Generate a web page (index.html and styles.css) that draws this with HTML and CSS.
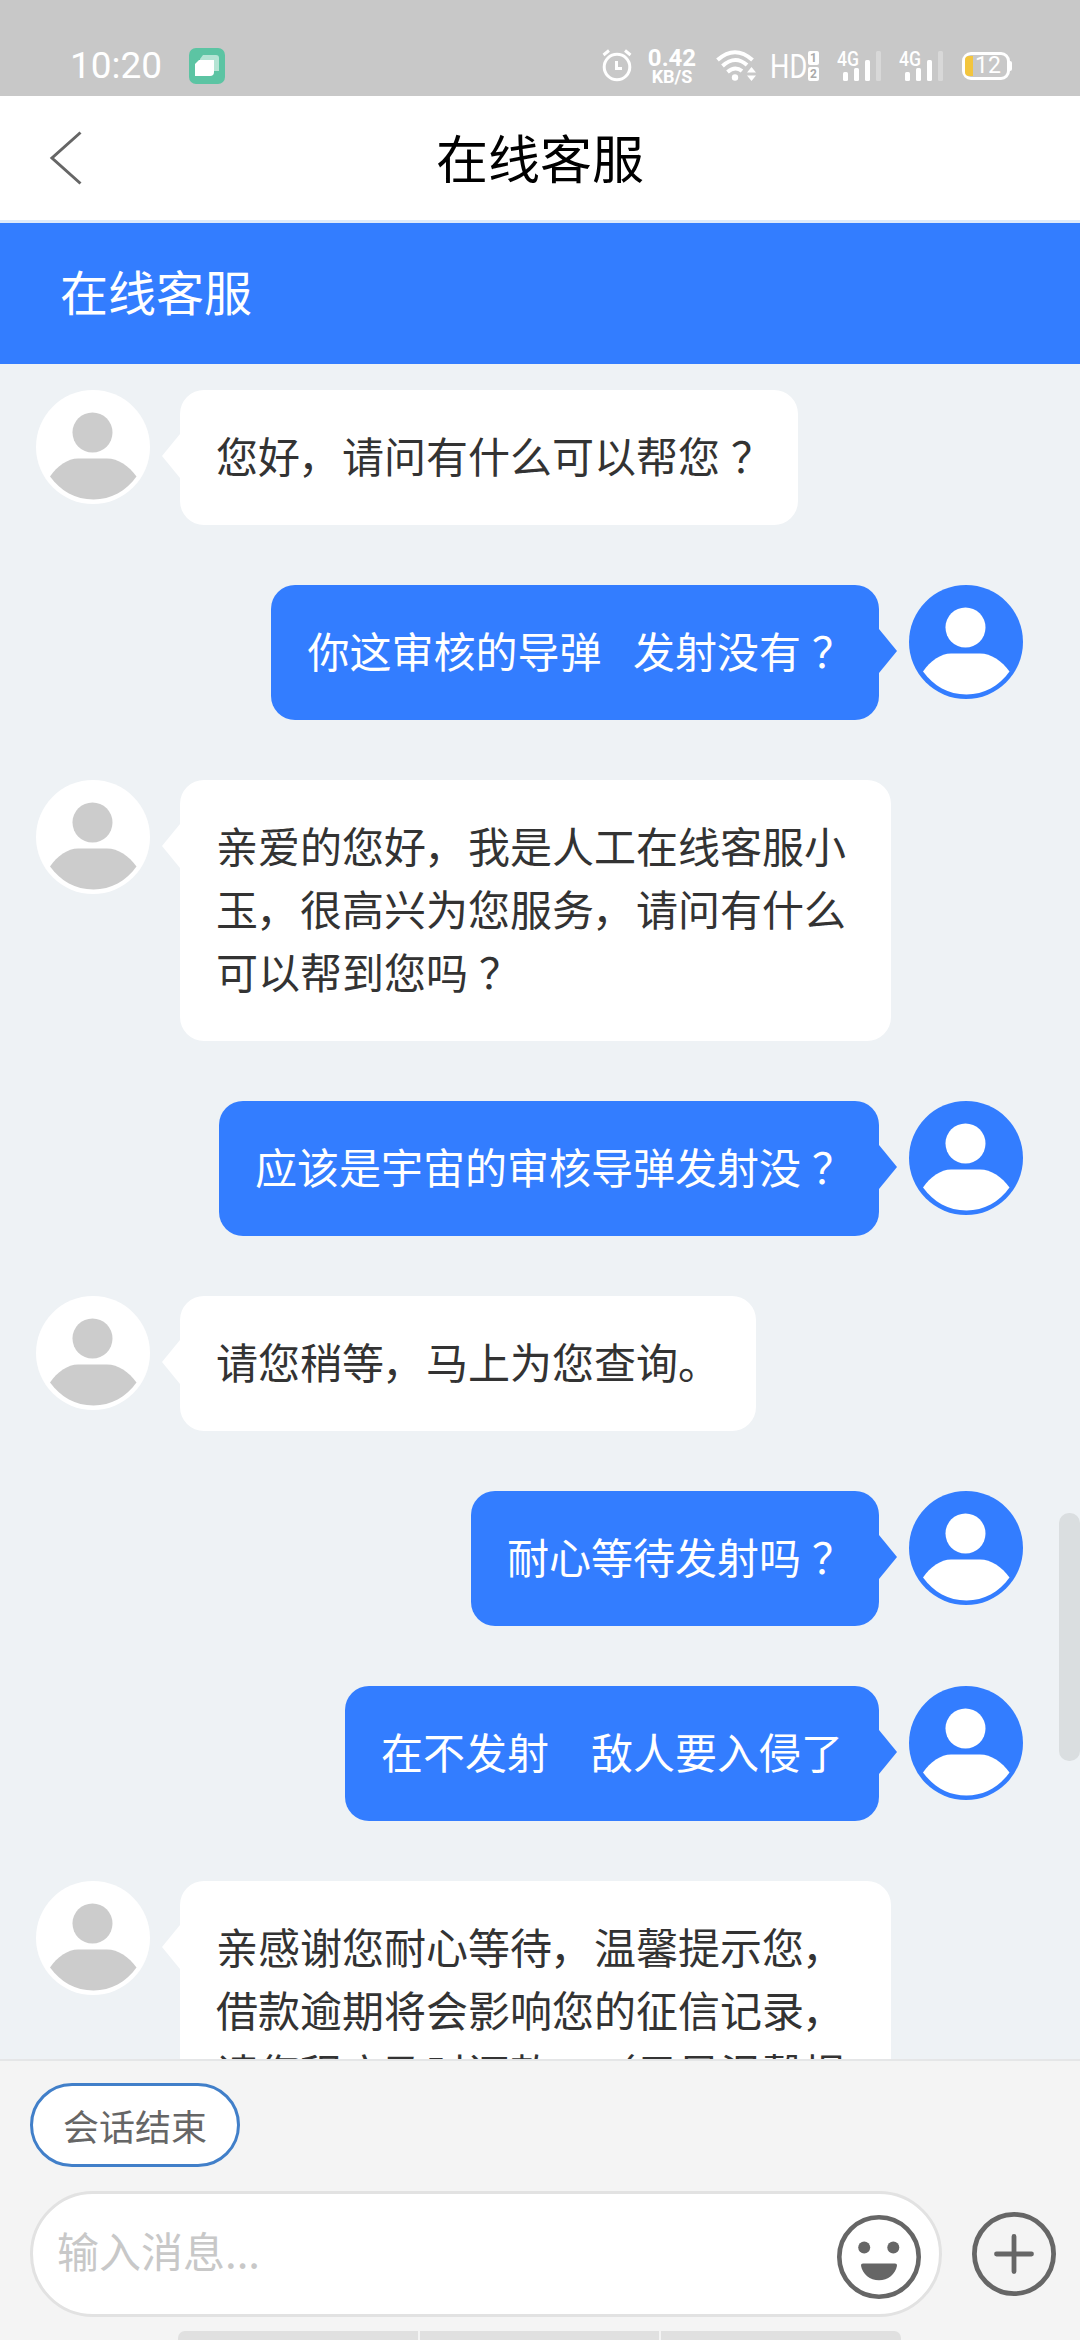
FILE: index.html
```html
<!DOCTYPE html>
<html lang="zh-CN">
<head>
<meta charset="utf-8">
<title>在线客服</title>
<link rel="stylesheet" href="styles.css">
</head>
<body>
<svg width="0" height="0" class="defs">
  <symbol id="person" viewBox="0 0 114 114">
    <ellipse cx="56.500" cy="42.500" rx="20" ry="20"/>
    <path d="M14 86.500C21 76 32 68.500 42 68.500H71C82 68.500 93 76 100.500 86.500C90 101 75 109.500 57.500 109.500C39 109.500 25 101 14 86.500Z"/>
  </symbol>
  <symbol id="bars" viewBox="0 0 46 34">
    <rect x="6" y="24" width="5" height="9" rx="1.500"/>
    <rect x="17" y="20" width="5" height="13" rx="1.500"/>
    <rect x="28" y="12" width="5" height="21" rx="1.500"/>
    <rect x="39" y="3" width="5" height="30" rx="1.500" opacity=".3"/>
  </symbol>
</svg>
<div class="screen">
  <div class="status">
    <span class="time">10:20</span>
    <svg class="app" viewBox="0 0 36 36"><rect width="36" height="36" rx="7" fill="#5cc4a3"/><path d="M14 7h13q3 0 3 3v13h-19v-12z" fill="#b5e4d4"/><path d="M10 12h15v12q0 4-4 4h-15v-12z" fill="#fff"/></svg>
    <span class="push"></span>
    <svg class="alarm" viewBox="0 0 30 34"><g fill="none" stroke="#fff" stroke-width="3"><circle cx="15" cy="19" r="12.800"/><path d="M1.500 7l5.500-4.500M28.500 7L23 2.500"/><path d="M14.500 13v7.500H20"/></g></svg>
    <span class="speed"><b>0.42</b><i>KB/S</i></span>
    <svg class="wifi" viewBox="0 0 40 34"><g fill="none" stroke="#fff" stroke-width="4"><path d="M1.500 12Q19 -3.500 36.500 12"/><path d="M6.500 18Q19 6.500 31 17"/><path d="M11.500 24Q19 17.500 26 23"/></g><circle cx="19" cy="29.500" r="3.200" fill="#fff"/><path d="M31 24.500l4.500-5.500 4.500 5.500zM31 27.500h9l-4.500 5.500z" fill="#fff"/></svg>
    <span class="hd">HD</span>
    <span class="sims"><i>1</i><i>2</i></span>
    <span class="signal"><svg><use href="#bars"/></svg><em>4G</em></span>
    <span class="signal last"><svg><use href="#bars"/></svg><em>4G</em></span>
    <span class="battery"><i></i>12</span>
  </div>
  <div class="nav">
    <svg class="back" viewBox="0 0 34 54"><path d="M31.500 1.500L3 27l28.500 25.500" fill="none" stroke="#666" stroke-width="3"/></svg>
    <h1>在线客服</h1>
  </div>
  <div class="banner">在线客服</div>
  <div class="chat">
    <div class="row"><svg class="avatar"><use href="#person"/></svg><div class="bubble">您好<span class="comma">，</span>请问有什么可以帮您<span class="mark">？</span></div></div>
    <div class="row me"><div class="bubble">你这审核的导弹   发射没有<span class="mark">？</span></div><svg class="avatar"><use href="#person"/></svg></div>
    <div class="row"><svg class="avatar"><use href="#person"/></svg><div class="bubble">亲爱的您好<span class="comma">，</span>我是人工在线客服小玉<span class="comma">，</span>很高兴为您服务<span class="comma">，</span>请问有什么可以帮到您吗<span class="mark">？</span></div></div>
    <div class="row me"><div class="bubble">应该是宇宙的审核导弹发射没<span class="mark">？</span></div><svg class="avatar"><use href="#person"/></svg></div>
    <div class="row"><svg class="avatar"><use href="#person"/></svg><div class="bubble">请您稍等<span class="comma">，</span>马上为您查询。</div></div>
    <div class="row me"><div class="bubble">耐心等待发射吗<span class="mark">？</span></div><svg class="avatar"><use href="#person"/></svg></div>
    <div class="row me"><div class="bubble">在不发射    敌人要入侵了</div><svg class="avatar"><use href="#person"/></svg></div>
    <div class="row"><svg class="avatar"><use href="#person"/></svg><div class="bubble">亲感谢您耐心等待<span class="comma">，</span>温馨提示您<span class="comma">，</span>借款逾期将会影响您的征信记录<span class="comma">，</span>请您程度及时还款<span class="comma">，</span>（只是温馨提</div></div>
    <div class="scrollbar"></div>
  </div>
  <div class="footer">
    <button class="pill">会话结束</button>
    <div class="compose">
      <div class="field"><span>输入消息...</span>
        <svg class="face" viewBox="0 0 84 84"><circle cx="42" cy="42" r="39.700" fill="none" stroke="#666" stroke-width="4.600"/><circle cx="27.200" cy="32.500" r="6" fill="#666"/><circle cx="56.300" cy="32.500" r="6" fill="#666"/><path d="M26 48.500h32q2.300 0 2 2.200c-1.500 8.500-9 14.500-18 14.500s-16.500-6-18-14.500q-.3-2.200 2-2.200z" fill="#666"/></svg>
      </div>
      <svg class="plus" viewBox="0 0 84 84"><g fill="none" stroke="#666" stroke-width="4.800" stroke-linecap="round"><circle cx="42" cy="42" r="39.600"/><path d="M42 24.500v35M24.500 42h35"/></g></svg>
    </div>
    <div class="tabs"><i></i><i></i><i></i></div>
  </div>
</div>
</body>
</html>
```
FILE: styles.css
```css
* { box-sizing: border-box; }
body { margin: 0; font-family: "Noto Sans CJK SC", sans-serif; text-spacing-trim: space-all; }
i, em { font-style: normal; }
.defs { position: absolute; }
.screen { width: 1080px; height: 2340px; display: flex; flex-direction: column; overflow: hidden; background: #eef2f5; }

.status { flex: none; height: 96px; padding: 48px 70px 12px 70px; display: flex; align-items: flex-start; background: #c8c8c8; color: #fff; font-family: Roboto, sans-serif; }
.time { width: 119px; font-size: 37px; line-height: 36px; }
.app { width: 36px; height: 36px; }
.push { flex: 1; }
.alarm { width: 30px; height: 34px; margin-right: 16px; }
.speed { width: 48px; margin-right: 20px; display: flex; flex-direction: column; align-items: center; }
.speed b { font-size: 24px; line-height: 20px; }
.speed i { font-size: 18px; line-height: 18px; font-weight: 700; }
.wifi { width: 40px; height: 34px; margin-right: 14px; }
.hd { width: 38px; font-size: 34px; line-height: 37px; transform: scaleX(.8); transform-origin: left; white-space: nowrap; }
.sims { width: 11px; margin: 3px 18px 0 0; display: flex; flex-direction: column; gap: 2px; }
.sims i { height: 14px; background: #fff; border-radius: 2px; color: #aaa; font-size: 12px; line-height: 14px; text-align: center; font-weight: 700; }
.signal { position: relative; width: 46px; height: 34px; margin-right: 16px; }
.signal.last { margin-right: 17px; }
.signal svg { width: 46px; height: 34px; display: block; fill: #fff; }
.signal em { position: absolute; left: 0; top: 0; font-size: 20px; line-height: 22px; transform: scaleX(.88); transform-origin: left; font-weight: 500; }
.battery { position: relative; width: 48px; height: 28px; margin-top: 4px; border: 3px solid #fff; border-radius: 9px; display: flex; align-items: center; gap: 2px; font-size: 23px; line-height: 22px; }
.battery i { width: 8px; height: 20px; border-radius: 4px 0 0 4px; background: #f3c53d; }
.battery::after { content: ""; position: absolute; right: -5px; top: 6px; width: 3px; height: 10px; border-radius: 0 2px 2px 0; background: #fff; }

.nav { flex: none; height: 127px; padding: 0 49px; display: grid; grid-template-columns: 34px 1fr 34px; align-items: center; background: #fff; border-bottom: 3px solid #dfeafa; }
.back { width: 34px; height: 54px; }
.nav h1 { margin: 0 0 2px; text-align: center; font-size: 52px; line-height: 76px; font-weight: 400; color: #000; }
.banner { flex: none; height: 141px; padding-left: 60px; line-height: 135px; font-size: 48px; color: #fff; background: #337dff; }

.chat { position: relative; flex: 1; min-height: 0; overflow: hidden; padding: 26px 57px 0 36px; display: flex; flex-direction: column; gap: 60px; }
.row { flex: none; display: flex; align-items: flex-start; gap: 30px; }
.me { justify-content: flex-end; }
.avatar { flex: none; width: 114px; height: 114px; border-radius: 50%; background: #fff; fill: #ccc; }
.me .avatar { background: #337dff; fill: #fff; }
.bubble { position: relative; max-width: 711px; padding: 33px 36px 39px; border-radius: 24px; background: #fff; color: #333; font-size: 42px; line-height: 63px; white-space: pre-wrap; word-spacing: 1.100px; }
.bubble::before { content: ""; position: absolute; top: 44px; left: -18px; border: solid transparent; border-width: 22px 18px 22px 0; border-right-color: #fff; }
.me .bubble { background: #337dff; color: #fff; }
.me .bubble::before { left: auto; right: -18px; border-width: 22px 0 22px 18px; border-left-color: #337dff; }
/* full-width punctuation sits differently in its cell: ？ centred, ， tight to the left */
.mark { position: relative; left: 11px; }
.comma { position: relative; left: -2px; }
.scrollbar { position: absolute; right: 0; top: 1149px; width: 21px; height: 248px; border-radius: 10px; background: #dadee0; }

.footer { flex: none; height: 281px; padding: 22px 24px 0 30px; display: flex; flex-direction: column; align-items: flex-start; background: #f4f4f4; border-top: 2px solid #e5e6e7; }
.pill { height: 84px; padding: 0 30px; border: 3px solid #417fc9; border-radius: 42px; background: #fff; color: #666; font: 36px/78px "Noto Sans CJK SC", sans-serif; }
.compose { width: 100%; margin-top: 24px; display: flex; align-items: center; justify-content: space-between; }
.field { width: 912px; height: 126px; padding: 0 18px 0 24px; border: 3px solid #e2e2e2; border-radius: 63px; background: #fff; display: flex; align-items: center; justify-content: space-between; color: #c8c8c8; font-size: 42px; line-height: 60px; }
.field span { margin-bottom: 9px; }
.face, .plus { width: 84px; height: 84px; }
.face { margin-top: 5px; }
.tabs { margin: 14px 0 0 148px; width: 723px; height: 9px; display: flex; gap: 2px; }
.tabs i { flex: 1; background: #e0e0e0; }
.tabs i:first-child { border-top-left-radius: 7px; }
.tabs i:last-child { border-top-right-radius: 7px; }
```
